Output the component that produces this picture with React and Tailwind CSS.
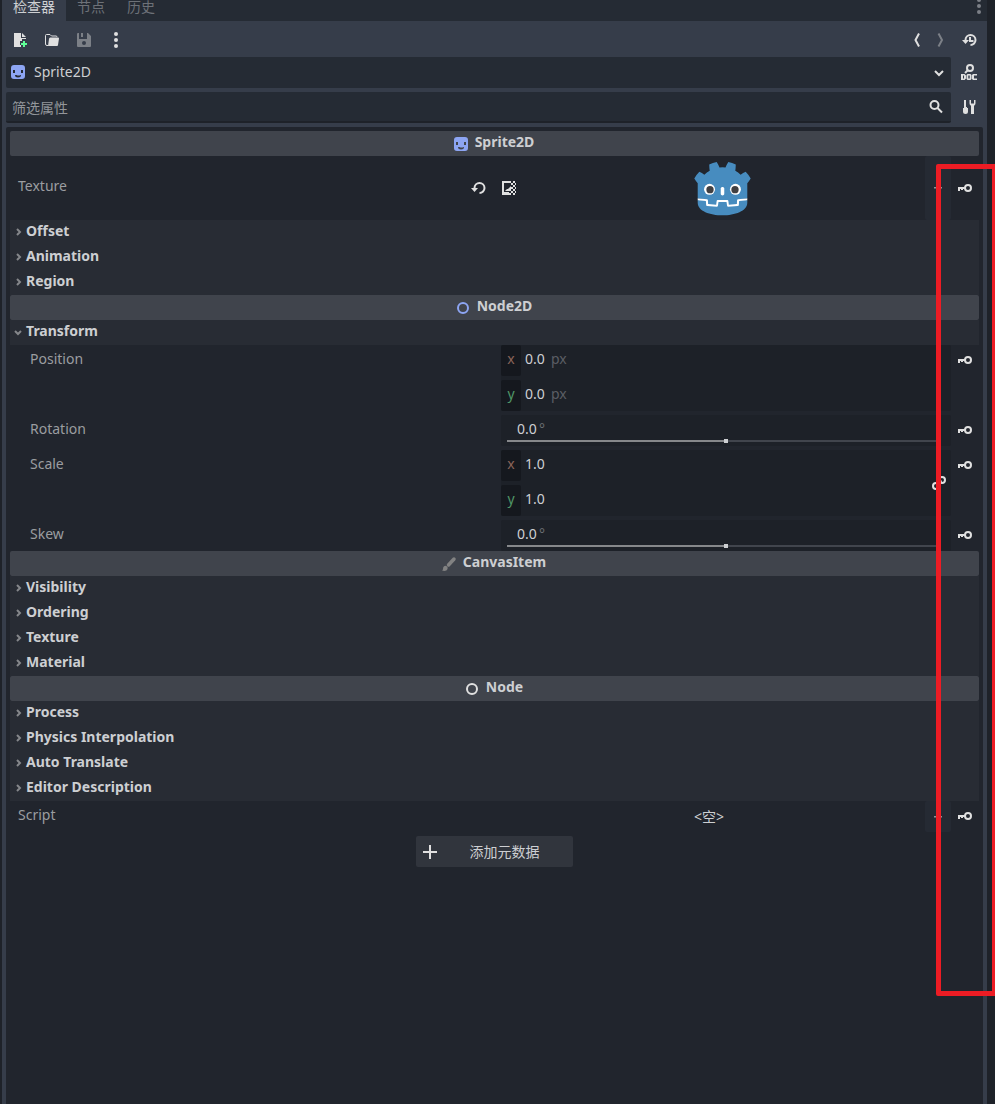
import React from 'react';

const sections = {
  sprite: ['Offset', 'Animation', 'Region'],
  canvas: ['Visibility', 'Ordering', 'Texture', 'Material'],
  node: ['Process', 'Physics Interpolation', 'Auto Translate', 'Editor Description'],
};

function Icon({ className = 'text-[#e0e0e0]', children }) {
  return (
    <svg width="16" height="16" viewBox="0 0 16 16" fill="currentColor" className={`shrink-0 ${className}`} aria-hidden="true">
      {children}
    </svg>
  );
}

function SpriteIcon({ className = '' }) {
  return (
    <Icon className={`text-[#8da5f3] ${className}`}>
      <path fillRule="evenodd" d="M4 1a3 3 0 0 0-3 3v8a3 3 0 0 0 3 3h8a3 3 0 0 0 3-3V4a3 3 0 0 0-3-3zM3 6h2v3H3zm8 0h2v3h-2zM5 11h1.500q2 1 4 0H11a3 2.500 0 0 1-6 0z" />
    </Icon>
  );
}

function RingIcon({ className }) {
  return (
    <Icon className={className}>
      <circle cx="8" cy="8" r="5" fill="none" stroke="currentColor" strokeWidth="2" />
    </Icon>
  );
}

function BrushIcon() {
  return (
    <Icon className="text-[#828282]">
      <path d="M7.500 9L13 3" stroke="currentColor" strokeWidth="3.500" strokeLinecap="round" />
      <path d="M4.500 9.800a2.600 2.600 0 0 1 2 3.200c-.5 1.800-3 2.500-5.500 1.500 1-.4 1-1.200 1.100-2.200.1-1.500 1.100-2.500 2.400-2.500z" />
    </Icon>
  );
}

function KeyButton({ name }) {
  return (
    <button type="button" aria-label={`Key ${name}`} className="flex h-[30px] w-7 items-center justify-center">
      <Icon>
        <circle cx="11" cy="8" r="3" fill="none" stroke="currentColor" strokeWidth="2" />
        <path d="M1 7h7v2H6v1H4V9H3v2H1z" />
      </Icon>
    </button>
  );
}

function IconButton({ label, className = 'w-7', children }) {
  return (
    <button type="button" aria-label={label} className={`flex h-[30px] shrink-0 items-center justify-center ${className}`}>
      {children}
    </button>
  );
}

function Category({ icon, title }) {
  return (
    <h2 className="flex h-[25px] items-center justify-center gap-1.5 rounded-xs bg-[#40444c] pr-0.5 font-bold leading-[22px]">
      <span className="pt-px">{icon}</span>
      <span className="pb-[3px]">{title}</span>
    </h2>
  );
}

function Section({ title, open }) {
  return (
    <button type="button" aria-expanded={!!open} className="flex h-[25px] w-full items-center bg-[#282c34] font-bold">
      <Icon className="mb-px text-[#85878b]">
        <path d={open ? 'M5 7l3 3 3-3' : 'M7 5l3 3-3 3'} fill="none" stroke="currentColor" strokeWidth="2" />
      </Icon>
      <span className="pb-[3px] leading-[22px]">{title}</span>
    </button>
  );
}

function Property({ name, nested, children }) {
  return (
    <div className="grid grid-cols-[491fr_450fr_28px]">
      <span className={`leading-7 text-[#9b9da0] ${nested ? 'pl-5' : 'pl-2'}`}>{name}</span>
      {children}
      <KeyButton name={name} />
    </div>
  );
}

function AxisField({ name, axis, value, unit }) {
  return (
    <label className="flex h-[31px] items-center">
      <span className={`mr-1 h-[31px] w-5 rounded-xs bg-[#15181e] text-center leading-7 ${axis === 'x' ? 'text-[#8a6459]' : 'text-[#509667]'}`}>
        {axis}
      </span>
      <input aria-label={`${name} ${axis}`} defaultValue={value} className="h-[26px] w-[26px] self-start bg-transparent outline-none" />
      {unit && <span className="self-start leading-7 text-[#5b5e64]">{unit}</span>}
    </label>
  );
}

function Vector({ name, value, unit, linked }) {
  return (
    <div className="relative flex flex-col gap-1 rounded-xs bg-[#1d2128]">
      <AxisField name={name} axis="x" value={value} unit={unit} />
      <AxisField name={name} axis="y" value={value} unit={unit} />
      {linked && (
        <button type="button" aria-label="Link axes" className="absolute top-[25px] right-1">
          <Icon>
            <g fill="none" stroke="currentColor" strokeWidth="2">
              <circle cx="11" cy="5" r="3" />
              <circle cx="5" cy="11" r="3" />
              <path d="M5.500 10.500l5-5" />
            </g>
          </Icon>
        </button>
      )}
    </div>
  );
}

function AngleField({ name }) {
  return (
    <div className="flex h-[31px] flex-col rounded-xs bg-[#1d2128] pr-2.5 pl-1.5">
      <label className="flex h-6 pl-2.5">
        <input aria-label={name} defaultValue="0.0" className="h-[26px] w-[22px] bg-transparent outline-none" />
        <span className="leading-7 text-[#6a6d72]">°</span>
      </label>
      <input
        type="range"
        aria-label={`${name} slider`}
        step="any"
        defaultValue="50.5"
        className="block h-1 w-full appearance-none bg-transparent [&::-webkit-slider-runnable-track]:h-0.5 [&::-webkit-slider-runnable-track]:bg-[linear-gradient(to_right,#86888b_50%,#41454d_50%)] [&::-webkit-slider-thumb]:-mt-px [&::-webkit-slider-thumb]:h-1 [&::-webkit-slider-thumb]:w-1 [&::-webkit-slider-thumb]:appearance-none [&::-webkit-slider-thumb]:bg-[#cdcfd2]"
      />
    </div>
  );
}

function DropArrow({ label }) {
  return (
    <button type="button" aria-label={label} className="flex w-[26px] shrink-0 items-center justify-center self-stretch rounded-xs bg-[#252a33]">
      <Icon className="text-[#929498]">
        <path d="M4 7h8v1.500h-2L8 11 6 8.500H4z" />
      </Icon>
    </button>
  );
}

function GodotLogo() {
  return (
    <svg width="57" height="57" viewBox="44 44 936 936" role="img" aria-label="Godot">
      <g fill="#fff">
        <path d="M105 673v33q407 354 814 0v-33z" />
        <path fill="#478cbf" d="m105 673 152 14q12 1 15 14l4 67 132 10 8-61q2-11 15-15h162q13 4 15 15l8 61 132-10 4-67q3-13 15-14l152-14V427q30-39 56-81-35-59-83-108-43 20-82 47-40-37-88-64 7-51 8-102-59-28-123-42-26 43-46 89-49-7-98 0-20-46-46-89-64 14-123 42 1 51 8 102-48 27-88 64-39-27-82-47-48 49-83 108 26 42 56 81zm0 33v39c0 276 813 276 814 0v-39l-134 12-5 69q-2 10-14 13l-162 11q-12 0-16-11l-10-65H446l-10 65q-4 11-16 11l-162-11q-12-3-14-13l-5-69z" />
        <path d="M483 600c0 34 58 34 58 0v-86c0-34-58-34-58 0z" />
        <circle cx="725" cy="526" r="90" />
        <circle cx="299" cy="526" r="90" />
      </g>
      <g fill="#414042">
        <circle cx="307" cy="532" r="60" />
        <circle cx="717" cy="532" r="60" />
      </g>
    </svg>
  );
}

function Tabs() {
  return (
    <div className="flex h-[21px] items-stretch bg-[#252b34] leading-[14px] text-[#6d7178]" role="tablist">
      <button type="button" role="tab" aria-selected="true" className="flex bg-[#363d4a] px-[11px] text-[#cdcfd2]">检查器</button>
      <button type="button" role="tab" aria-selected="false" className="flex px-[11px]">节点</button>
      <button type="button" role="tab" aria-selected="false" className="flex px-[11px]">历史</button>
      <button type="button" aria-label="Dock menu" className="ml-auto flex w-4">
        <Icon className="text-[#7c8087]">
          <circle cx="8" cy="0" r="2" />
          <circle cx="8" cy="6" r="2" />
          <circle cx="8" cy="12" r="2" />
        </Icon>
      </button>
    </div>
  );
}

function Toolbar() {
  return (
    <div className="flex h-9 items-center gap-1 pt-0.5">
      <IconButton label="New resource">
        <Icon>
          <path d="M2 1v14h7v-2H8v-4h2V7h4V6H9V1zm8 0v4h4z" />
          <path fill="#5fff97" d="M11 9v2H9v2h2v2h2v-2h2v-2h-2V9z" />
        </Icon>
      </IconButton>
      <IconButton label="Open resource">
        <Icon>
          <path d="M4 13.500H3A1.500 1.500 0 0 1 1.500 12V3.500a1 1 0 0 1 1-1H6L7.500 4H12a1 1 0 0 1 1 1" fill="none" stroke="currentColor" />
          <path d="M7 5.500h7a1 1 0 0 1 1 1L14 13a1 1 0 0 1-1 1H4l1-7a1.600 1.600 0 0 1 2-1.500z" />
        </Icon>
      </IconButton>
      <IconButton label="Save resource">
        <Icon className="text-[#7c8087]">
          <path fillRule="evenodd" d="M2 1a1 1 0 0 0-1 1v12a1 1 0 0 0 1 1h12a1 1 0 0 0 1-1V4l-3-3h-1v6H3V1zm3 0v4h2V1zm3 8a2 2 0 1 0 0 4 2 2 0 0 0 0-4z" />
        </Icon>
      </IconButton>
      <IconButton label="More options">
        <Icon>
          <circle cx="8" cy="2" r="2" />
          <circle cx="8" cy="8" r="2" />
          <circle cx="8" cy="14" r="2" />
        </Icon>
      </IconButton>
      <div className="ml-auto flex">
        <IconButton label="Previous" className="w-6">
          <Icon>
            <path d="M12 1.500L8.500 8l3.500 6.500" fill="none" stroke="currentColor" strokeWidth="2" />
          </Icon>
        </IconButton>
        <IconButton label="Next" className="w-6">
          <Icon className="text-[#7c8087]">
            <path d="M7.500 1.500L11 8l-3.500 6.500" fill="none" stroke="currentColor" strokeWidth="2" />
          </Icon>
        </IconButton>
      </div>
      <IconButton label="History">
        <Icon>
          <path d="M4.500 8a5 5 0 1 1 5 5M9 5v4h3.500" fill="none" stroke="currentColor" strokeWidth="2" />
          <path d="M1 8h7l-3.500 4z" />
        </Icon>
      </IconButton>
    </div>
  );
}

export default function App() {
  return (
    <div className="relative flex min-h-screen overflow-hidden bg-[#1e2229] pr-2 pl-0.5 font-['Noto_Sans','Noto_Sans_CJK_SC',sans-serif] text-sm text-[#cdcfd2]">
      <div className="flex flex-1 flex-col bg-[#363d4a]">
        <Tabs />
        <div className="flex flex-1 flex-col px-1">
          <Toolbar />

          {/* Object selector */}
          <div className="flex items-start gap-1">
            <label className="flex h-[31px] flex-1 items-center rounded-xs bg-[#252b34] px-1">
              <SpriteIcon className="mb-px" />
              <select aria-label="Object" className="ml-2 h-[31px] flex-1 appearance-none bg-transparent pb-0.5 outline-none">
                <option>Sprite2D</option>
              </select>
              <Icon>
                <path d="M4 6l4 4 4-4" fill="none" stroke="currentColor" strokeWidth="2" />
              </Icon>
            </label>
            <IconButton label="Open documentation">
              <Icon>
                <circle cx="9" cy="4" r="3" fill="none" stroke="currentColor" strokeWidth="2" />
                <path d="M7 6L4 9" stroke="currentColor" strokeWidth="2" />
                <path fillRule="evenodd" d="M0 10h3.500L5 11.500v3L3.500 16H0zm2 1.500v3h1v-3zM6.500 10h3l1 1v4l-1 1h-3l-1-1v-4zm.8 1.500v3h1.400v-3zM12 10h4v1.500h-3v3h3V16h-4l-1-1v-4z" />
              </Icon>
            </IconButton>
          </div>

          {/* Filter */}
          <div className="mt-1 flex items-start gap-1">
            <label className="flex h-[31px] flex-1 items-center rounded-xs border-b-2 border-[#1e2229] bg-[#252b34] pr-[7px] pl-1.5">
              <input type="text" aria-label="筛选属性" placeholder="筛选属性" className="h-7 flex-1 bg-transparent pt-0.5 outline-none placeholder:text-[#93969b]" />
              <Icon>
                <circle cx="6.500" cy="6" r="4" fill="none" stroke="currentColor" strokeWidth="2" />
                <path d="M9.500 9l4.500 4.500" stroke="currentColor" strokeWidth="2" />
              </Icon>
            </label>
            <IconButton label="Manage properties">
              <Icon>
                <path d="M3 1h2v7h1v1h1v3.500a2.500 2.500 0 0 1-5 0V9h1z" />
                <path d="M8.500 1v3c0 1.500.6 2.300 1.500 2.800V15h3V6.800c.9-.5 1.500-1.300 1.500-2.800V1h-1.500v3.500h-3V1z" />
              </Icon>
            </IconButton>
          </div>

          {/* Properties */}
          <div className="mt-1 flex-1 rounded-t-xs bg-[#21252d] p-1">
            <Category icon={<SpriteIcon />} title="Sprite2D" />
            <div className="grid h-16 grid-cols-[491fr_450fr_28px] items-center">
              <div className="flex items-center justify-between pr-3.5 pl-2">
                <span className="pb-1 text-[#9b9da0]">Texture</span>
                <button type="button" aria-label="Revert texture">
                  <Icon>
                    <path d="M3.500 9V8a5 5 0 1 1 5 5" fill="none" stroke="currentColor" strokeWidth="2" />
                    <path d="M0 8h7l-3.500 4z" />
                  </Icon>
                </button>
              </div>
              <div className="flex h-16 items-center">
                <button type="button" aria-label="Texture" className="flex flex-1 items-center">
                  <Icon>
                    <path d="M1 1h9v2H3v9h5v3H1z" />
                    <path d="M4 11l2-2h1l3-3v5z" />
                    <path d="M10 3h2v2h-2zM12 1h2v2h-2zM12 5h2v2h-2zM10 7h2v2h-2zM12 9h2v2h-2zM10 11h2v2h-2zM8 13h2v2H8zM12 13h2v2h-2zM14 3h1v2h-1zM14 7h1v2h-1zM14 11h1v2h-1z" />
                  </Icon>
                  <span className="flex flex-1 justify-center pl-0.5"><GodotLogo /></span>
                </button>
                <DropArrow label="Texture menu" />
              </div>
              <KeyButton name="Texture" />
            </div>
            {sections.sprite.map(title => <Section key={title} title={title} />)}

            <Category icon={<RingIcon className="text-[#8da5f3]" />} title="Node2D" />
            <Section title="Transform" open />
            <div className="flex flex-col gap-1">
              <Property name="Position" nested>
                <Vector name="Position" value="0.0" unit="px" />
              </Property>
              <Property name="Rotation" nested>
                <AngleField name="Rotation" />
              </Property>
              <Property name="Scale" nested>
                <Vector name="Scale" value="1.0" linked />
              </Property>
              <Property name="Skew" nested>
                <AngleField name="Skew" />
              </Property>
            </div>

            <Category icon={<BrushIcon />} title="CanvasItem" />
            {sections.canvas.map(title => <Section key={title} title={title} />)}

            <Category icon={<RingIcon />} title="Node" />
            {sections.node.map(title => <Section key={title} title={title} />)}

            <Property name="Script">
              <div className="flex h-[31px] items-center">
                <button type="button" className="flex-1 pr-2">&lt;空&gt;</button>
                <DropArrow label="Script menu" />
              </div>
            </Property>

            <button type="button" className="mx-auto mt-1 flex h-[31px] w-[157px] items-center rounded-xs bg-[#31353d] px-1.5">
              <Icon>
                <path d="M7 1v6H1v2h6v6h2V9h6V7H9V1z" />
              </Icon>
              <span className="flex-1 pl-1 text-center">添加元数据</span>
            </button>
          </div>
        </div>
      </div>

      {/* Highlight around the key column */}
      <div className="pointer-events-none absolute top-[164px] -right-0.5 h-[832px] w-[61px] rounded-xs border-5 border-[#ed1c24]" />
    </div>
  );
}
